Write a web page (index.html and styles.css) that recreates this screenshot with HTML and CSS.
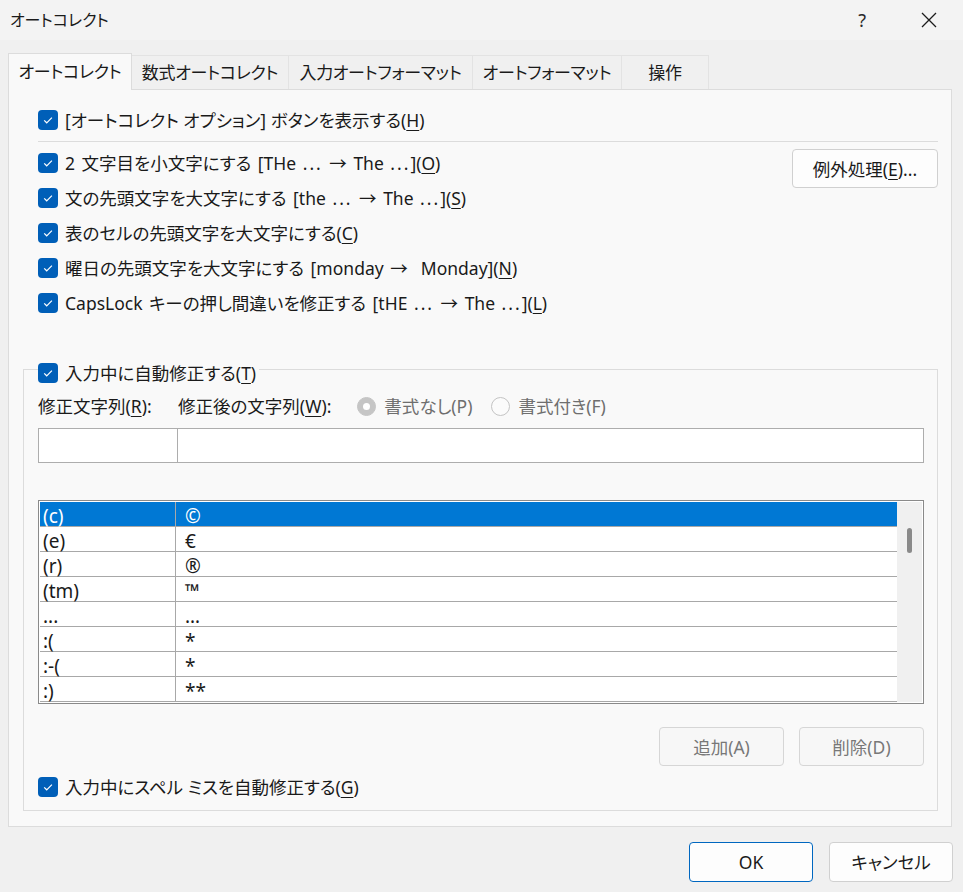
FILE: index.html
```html
<!DOCTYPE html>
<html lang="ja">
<head>
<meta charset="utf-8">
<title>オートコレクト</title>
<link rel="stylesheet" href="styles.css">
</head>
<body>
<div class="dialog">
  <header class="titlebar">
    <span class="title">オートコレクト</span>
    <span class="tb-actions">
      <span class="help">?</span>
      <svg class="close" width="16" height="16" viewBox="0 0 16 16"><path d="M1 1 L15 15 M15 1 L1 15" stroke="#1b1b1b" stroke-width="1.3" fill="none"/></svg>
    </span>
  </header>

  <nav class="tabs">
    <div class="tab active t1">オートコレクト</div>
    <div class="tab t2">数式オートコレクト</div>
    <div class="tab t3">入力オートフォーマット</div>
    <div class="tab t4">オートフォーマット</div>
    <div class="tab t5">操作</div>
  </nav>

  <section class="panel">
    <div class="top">
      <div class="chk">
        <span class="box"><svg width="20" height="20" viewBox="0 0 20 20"><path d="M6.2 10.4 L8.7 12.8 L13.9 7.6" stroke="#fff" stroke-width="1.2" fill="none"/></svg></span>
        <span class="lbl">[オートコレクト オプション] ボタンを表示する(<u>H</u>)</span>
      </div>
      <div class="sep"></div>
      <div class="opts">
        <div class="opt-list">
          <div class="chk">
            <span class="box"><svg width="20" height="20" viewBox="0 0 20 20"><path d="M6.2 10.4 L8.7 12.8 L13.9 7.6" stroke="#fff" stroke-width="1.2" fill="none"/></svg></span>
            <span class="lbl">2 文字目を小文字にする [THe <span class="ell">...</span> <span class="arr">→</span> The <span class="ell">...</span>](<u>O</u>)</span>
          </div>
          <div class="chk">
            <span class="box"><svg width="20" height="20" viewBox="0 0 20 20"><path d="M6.2 10.4 L8.7 12.8 L13.9 7.6" stroke="#fff" stroke-width="1.2" fill="none"/></svg></span>
            <span class="lbl">文の先頭文字を大文字にする [the <span class="ell">...</span> <span class="arr">→</span> The <span class="ell">...</span>](<u>S</u>)</span>
          </div>
          <div class="chk">
            <span class="box"><svg width="20" height="20" viewBox="0 0 20 20"><path d="M6.2 10.4 L8.7 12.8 L13.9 7.6" stroke="#fff" stroke-width="1.2" fill="none"/></svg></span>
            <span class="lbl">表のセルの先頭文字を大文字にする(<u>C</u>)</span>
          </div>
          <div class="chk">
            <span class="box"><svg width="20" height="20" viewBox="0 0 20 20"><path d="M6.2 10.4 L8.7 12.8 L13.9 7.6" stroke="#fff" stroke-width="1.2" fill="none"/></svg></span>
            <span class="lbl">曜日の先頭文字を大文字にする [monday <span class="arr">→</span>&nbsp; Monday](<u>N</u>)</span>
          </div>
          <div class="chk">
            <span class="box"><svg width="20" height="20" viewBox="0 0 20 20"><path d="M6.2 10.4 L8.7 12.8 L13.9 7.6" stroke="#fff" stroke-width="1.2" fill="none"/></svg></span>
            <span class="lbl">CapsLock キーの押し間違いを修正する [tHE <span class="ell">...</span> <span class="arr">→</span> The <span class="ell">...</span>](<u>L</u>)</span>
          </div>
        </div>
        <div class="btn btn-exc">例外処理(<u>E</u>)...</div>
      </div>
    </div>

    <div class="group">
      <div class="legend chk">
        <span class="box"><svg width="20" height="20" viewBox="0 0 20 20"><path d="M6.2 10.4 L8.7 12.8 L13.9 7.6" stroke="#fff" stroke-width="1.2" fill="none"/></svg></span>
        <span class="lbl">入力中に自動修正する(<u>T</u>)</span>
      </div>

      <div class="labels">
        <span class="lab1">修正文字列(<u>R</u>):</span>
        <span class="lab2">修正後の文字列(<u>W</u>):</span>
        <span class="radio on"><span class="dot"></span></span>
        <span class="rlbl">書式なし(P)</span>
        <span class="radio"></span>
        <span class="rlbl">書式付き(F)</span>
      </div>

      <div class="inputs">
        <div class="in in1"></div>
        <div class="in in2"></div>
      </div>

      <div class="list">
        <div class="rows">
          <div class="row sel"><span class="c1">(c)</span><span class="c2">©</span></div>
          <div class="row"><span class="c1">(e)</span><span class="c2">€</span></div>
          <div class="row"><span class="c1">(r)</span><span class="c2">®</span></div>
          <div class="row"><span class="c1">(tm)</span><span class="c2">™</span></div>
          <div class="row"><span class="c1">...</span><span class="c2">…</span></div>
          <div class="row"><span class="c1">:(</span><span class="c2">*</span></div>
          <div class="row"><span class="c1">:-(</span><span class="c2">*</span></div>
          <div class="row"><span class="c1">:)</span><span class="c2">**</span></div>
        </div>
        <div class="scroll"><div class="thumb"></div></div>
      </div>

      <div class="list-btns">
        <div class="btn btn-dis">追加(A)</div>
        <div class="btn btn-dis">削除(D)</div>
      </div>

      <div class="chk chk-last">
        <span class="box"><svg width="20" height="20" viewBox="0 0 20 20"><path d="M6.2 10.4 L8.7 12.8 L13.9 7.6" stroke="#fff" stroke-width="1.2" fill="none"/></svg></span>
        <span class="lbl">入力中にスペル ミスを自動修正する(<u>G</u>)</span>
      </div>
    </div>
  </section>

  <footer class="footer">
    <div class="btn btn-ok">OK</div>
    <div class="btn btn-foot">キャンセル</div>
  </footer>
</div>
</body>
</html>
```

FILE: styles.css
```css
* { box-sizing: border-box; }

html, body {
  margin: 0;
  padding: 0;
}

body {
  width: 963px;
  height: 892px;
  background: #f0f0f0;
  font-family: "Noto Sans", "Noto Sans CJK JP", sans-serif;
  font-feature-settings: "palt";
  font-size: 17.5px;
  color: #1a1a1a;
  overflow: hidden;
}

.dialog {
  display: flex;
  flex-direction: column;
  width: 963px;
  height: 892px;
}

u {
  text-decoration: underline;
  text-underline-offset: 3px;
  text-decoration-thickness: 1px;
}

.ell {
  letter-spacing: 2px;
}

.arr {
  font-family: "Noto Sans CJK JP", sans-serif;
}

/* title bar */
.titlebar {
  height: 40px;
  background: #f3f3f3;
  display: flex;
  align-items: center;
  justify-content: space-between;
  padding: 0 26px 0 10px;
}

.title {
  font-size: 16px;
  line-height: 20px;
}

.tb-actions {
  display: flex;
  align-items: center;
}

.help {
  font-size: 18px;
  color: #2a2a2a;
  margin-right: 55px;
  line-height: 20px;
}

.close {
  display: block;
}

/* tabs */
.tabs {
  display: flex;
  align-items: flex-end;
  margin-top: 13px;
  padding-left: 8px;
  height: 36px;
}

.tab {
  flex: none;
  height: 34px;
  display: flex;
  align-items: center;
  justify-content: center;
  border: 1px solid #e3e3e3;
  border-bottom: none;
  border-left: none;
  background: #f0f0f0;
  line-height: 20px;
  font-size: 17px;
  letter-spacing: -0.3px;
  white-space: nowrap;
}

.t1 { width: 124px; }
.t2 { width: 157px; }
.t3 { width: 184px; }
.t4 { width: 149px; }
.t5 { width: 87px; }

.tab.active {
  height: 37px;
  margin-bottom: -1px;
  border-left: 1px solid #dcdcdc;
  border-top: 1px solid #dcdcdc;
  border-right: 1px solid #dcdcdc;
  background: #f9f9f9;
  position: relative;
  z-index: 1;
}

/* panel */
.panel {
  margin: 0 11px 0 8px;
  border: 1px solid #dcdcdc;
  background: #f9f9f9;
  padding: 0 13px 15px 14px;
}

.top {
  padding: 20px 0 0 15px;
}

.chk {
  display: flex;
  align-items: center;
  height: 20px;
  white-space: nowrap;
}

.box {
  width: 20px;
  height: 20px;
  border-radius: 4px;
  background: #005fb8;
  display: block;
  flex: none;
}

.box svg {
  display: block;
}

.lbl {
  margin-left: 7px;
  line-height: 20px;
}

.opt-list .lbl {
  word-spacing: 2px;
}

.sep {
  height: 1px;
  background: #dcdcdc;
  margin-top: 11px;
}

.opts {
  display: flex;
  justify-content: space-between;
  align-items: flex-start;
  margin-top: 11px;
}

.opt-list {
  display: flex;
  flex-direction: column;
  gap: 15px;
}

.btn {
  display: flex;
  align-items: center;
  justify-content: center;
  border: 1px solid #d0d0d0;
  border-radius: 4px;
  background: #fdfdfd;
  line-height: 20px;
  white-space: nowrap;
}

.btn-exc {
  width: 146px;
  height: 39px;
  margin-top: -4px;
}

/* group */
.group {
  margin-top: 56px;
  border: 1px solid #dcdcdc;
  padding: 0 13px 13px 14px;
}

.legend {
  margin-top: -7px;
  width: max-content;
  background: #f9f9f9;
  padding-right: 3px;
}

.labels {
  display: flex;
  align-items: center;
  height: 22px;
  margin-top: 12px;
  white-space: nowrap;
  line-height: 20px;
}

.lab1 {
  width: 140px;
}

.lab2 {
  margin-right: 26px;
}

.radio {
  width: 19px;
  height: 19px;
  border-radius: 50%;
  border: 1px solid #c4c4c4;
  background: #fbfbfb;
  display: flex;
  align-items: center;
  justify-content: center;
  flex: none;
}

.radio.on {
  background: #c5c5c5;
  border-color: #c5c5c5;
}

.dot {
  width: 7px;
  height: 7px;
  border-radius: 50%;
  background: #ffffff;
}

.rlbl {
  color: #6e6e6e;
  margin-left: 8px;
  margin-right: 19px;
}

.inputs {
  display: flex;
  margin-top: 11px;
  height: 35px;
}

.in {
  background: #ffffff;
  border: 1px solid #adadad;
}

.in1 {
  width: 140px;
}

.in2 {
  flex: 1;
  border-left: none;
}

/* list */
.list {
  margin-top: 37px;
  height: 204px;
  border: 1px solid #8a8a8a;
  padding: 1px;
  background: #ffffff;
  display: flex;
}

.rows {
  flex: 1;
  display: flex;
  flex-direction: column;
}

.row {
  height: 25px;
  display: flex;
  border-bottom: 1px solid #a8a8a8;
  font-size: 19px;
  line-height: 24px;
  background: #ffffff;
}

.row.sel {
  background: #0078d4;
  color: #ffffff;
}

.c1 {
  width: 136px;
  border-right: 1px solid #a8a8a8;
  padding: 2px 0 0 3px;
}

.c2 {
  padding: 2px 0 0 9px;
}

.scroll {
  width: 25px;
  background: #f0f0f0;
  flex: none;
}

.thumb {
  width: 5px;
  height: 25px;
  margin: 26px 0 0 10px;
  background: #8a8a8a;
  border-radius: 3px;
}

.list-btns {
  display: flex;
  justify-content: flex-end;
  gap: 15px;
  margin-top: 23px;
}

.btn-dis {
  width: 125px;
  height: 39px;
  color: #787878;
  background: #f7f7f7;
  border-color: #d6d6d6;
}

.chk-last {
  margin-top: 11px;
}

/* footer */
.footer {
  display: flex;
  justify-content: flex-end;
  gap: 16px;
  margin-top: 15px;
  padding-right: 10px;
}

.btn-ok,
.btn-foot {
  width: 124px;
  height: 40px;
}

.btn-ok {
  border-color: #0067c0;
}
```
